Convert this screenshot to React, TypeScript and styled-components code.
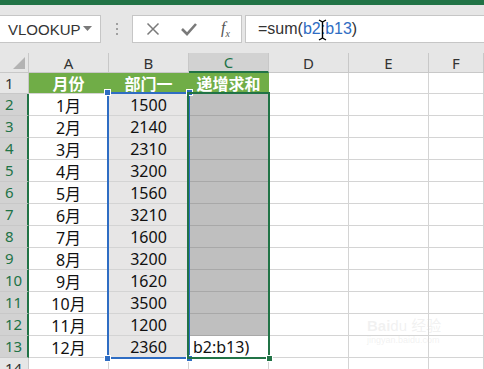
import styled, { createGlobalStyle } from "styled-components";

const GlobalStyle = createGlobalStyle`
  html, body {
    margin: 0;
    padding: 0;
    background: #fff;
  }
  body {
    font-family: "Noto Sans", "Noto Sans CJK SC", sans-serif;
  }
`;

const GREEN = "#217346";
const BLUE = "#2f6dc3";
const GRID = "#d4d4d4";

const months = ["1月", "2月", "3月", "4月", "5月", "6月", "7月", "8月", "9月", "10月", "11月", "12月"];
const amounts = ["1500", "2140", "2310", "3200", "1560", "3210", "1600", "3200", "1620", "3500", "1200", "2360"];
const letters = ["A", "B", "C", "D", "E", "F"];

function App() {
  return (
    <Page>
      <GlobalStyle />
      <RibbonEdge />
      <Toolbar>
        <NameBox>
          VLOOKUP
          <svg width="9" height="6" viewBox="0 0 9 6">
            <path d="M0 0 L9 0 L4.5 5 Z" fill="#7a7a7a" />
          </svg>
        </NameBox>
        <Grip>
          <i />
          <i />
          <i />
        </Grip>
        <IconBox>
          <svg width="16" height="16" viewBox="0 0 16 16">
            <path d="M2.5 2.5 L13.5 13.5 M13.5 2.5 L2.5 13.5" stroke="#7a7a7a" strokeWidth="1.5" />
          </svg>
          <svg width="18" height="16" viewBox="0 0 18 16">
            <path d="M2 8 L7 13 L16 3" stroke="#7a7a7a" strokeWidth="2.6" fill="none" />
          </svg>
          <Fx>
            f<sub>x</sub>
          </Fx>
        </IconBox>
        <FormulaBox>
          =sum(<Ref>b2:b13</Ref>)
          <Caret width="9" height="22" viewBox="0 0 9 22">
            <path d="M1 1 L4.5 3 L8 1 M4.5 3 L4.5 19 M1 21 L4.5 19 L8 21" stroke="#000" strokeWidth="1.4" fill="none" />
          </Caret>
        </FormulaBox>
      </Toolbar>

      <Sheet>
        <Corner $r={1} $c={1}>
          <svg width="12" height="12" viewBox="0 0 12 12">
            <path d="M12 0 L12 12 L0 12 Z" fill="#b3b3b3" />
          </svg>
        </Corner>
        {letters.map((l, i) => (
          <ColHead key={l} $r={1} $c={i + 2} $active={l === "C"}>
            {l}
          </ColHead>
        ))}

        {Array.from({ length: 14 }, (_, i) => (
          <RowHead key={i} $r={i + 2} $c={1} $active={i >= 1 && i <= 12}>
            {i + 1}
          </RowHead>
        ))}

        <Cell $r={2} $c={2} $fill="#70ad47" $bold $light>月份</Cell>
        <Cell $r={2} $c={3} $fill="#70ad47" $bold $light>部门一</Cell>
        <Cell $r={2} $c={4} $fill="#70ad47" $bold $light>递增求和</Cell>
        {[5, 6, 7].map((c) => (
          <Cell key={c} $r={2} $c={c} />
        ))}

        {months.map((m, i) => (
          <Row key={m} r={i + 3} month={m} amount={amounts[i]} last={i === 11} />
        ))}

        {[2, 3, 4, 5, 6, 7].map((c) => (
          <Cell key={c} $r={15} $c={c} />
        ))}

        <Frame $col={3} $color={BLUE} $z={2}>
          <Handle $top $left $color={BLUE} />
          <Handle $top $color={BLUE} />
          <Handle $left $color={BLUE} />
          <Handle $color={BLUE} />
        </Frame>
        <Frame $col={4} $color={GREEN} $z={3}>
          <Handle $color={GREEN} />
        </Frame>
      </Sheet>

      <Watermark>
        <b>Bai</b>
        <span>du</span> 经验
        <small>jingyan.baidu.com</small>
      </Watermark>
    </Page>
  );
}

function Row({ r, month, amount, last }: { r: number; month: string; amount: string; last: boolean }) {
  return (
    <>
      <Cell $r={r} $c={2}>{month}</Cell>
      <Cell $r={r} $c={3} $fill="#e7e6e6">{amount}</Cell>
      {last ? (
        <Cell $r={r} $c={4} $start>b2:b13)</Cell>
      ) : (
        <Cell $r={r} $c={4} $fill="#bfbfbf" $line="#a8a8a8" />
      )}
      {[5, 6, 7].map((c) => (
        <Cell key={c} $r={r} $c={c} />
      ))}
    </>
  );
}

export default App;

const Page = styled.div`
  position: relative;
  width: 484px;
  height: 369px;
  overflow: hidden;
  background: #fff;
  display: flex;
  flex-direction: column;
`;

const RibbonEdge = styled.div`
  height: 5px;
  flex: none;
  background: ${GREEN};
`;

const Toolbar = styled.div`
  height: 48px;
  flex: none;
  box-sizing: border-box;
  padding-top: 10px;
  background: #e6e6e6;
  display: flex;
  align-items: flex-start;
`;

const NameBox = styled.div`
  width: 101px;
  height: 28px;
  box-sizing: border-box;
  background: #fff;
  border: 1px solid #c6c6c6;
  border-left: none;
  padding: 0 8px 0 8px;
  display: flex;
  align-items: center;
  justify-content: space-between;
  font-family: "Liberation Sans", sans-serif;
  font-size: 15px;
  color: #333;
`;

const Grip = styled.div`
  width: 31px;
  height: 28px;
  display: flex;
  flex-direction: column;
  align-items: center;
  justify-content: center;
  gap: 3px;

  i {
    display: block;
    width: 2px;
    height: 2px;
    background: #a0a0a0;
  }
`;

const IconBox = styled.div`
  width: 110px;
  height: 28px;
  box-sizing: border-box;
  background: #fff;
  border: 1px solid #c6c6c6;
  display: flex;
  align-items: center;
  padding-left: 12px;
  gap: 19px;
`;

const Fx = styled.span`
  font-family: "Liberation Serif", serif;
  font-style: italic;
  font-size: 16px;
  color: #555;
  margin-left: 4px;

  sub {
    font-size: 10px;
  }
`;

const FormulaBox = styled.div`
  position: relative;
  flex: 1;
  height: 28px;
  margin-left: 3px;
  box-sizing: border-box;
  background: #fff;
  border: 1px solid #c6c6c6;
  border-right: none;
  padding-left: 12px;
  display: flex;
  align-items: center;
  font-family: "Liberation Sans", sans-serif;
  font-size: 16px;
  color: #333;
`;

const Ref = styled.span`
  color: ${BLUE};
`;

const Caret = styled.svg`
  position: absolute;
  left: 72px;
  top: 3px;
`;

const Sheet = styled.div`
  flex: 1;
  display: grid;
  grid-template-columns: 29px repeat(5, 80px) 1fr;
  grid-template-rows: 20px 21px repeat(12, 22px) 1fr;
  font-family: "Noto Sans", "Noto Sans CJK SC", sans-serif;
`;

type Place = { $r: number; $c: number };

const HeadBase = styled.div<Place & { $active?: boolean }>`
  grid-row: ${(p) => p.$r};
  grid-column: ${(p) => p.$c};
  box-sizing: border-box;
  display: flex;
  align-items: center;
  justify-content: center;
  font-size: 15px;
  line-height: 1;
  background: ${(p) => (p.$active ? "#d2d2d2" : "#e6e6e6")};
  color: ${(p) => (p.$active ? GREEN : "#333")};
  border-right: 1px solid #c8c8c8;
  border-bottom: 1px solid #c8c8c8;
`;

const Corner = styled(HeadBase)`
  align-items: flex-end;
  justify-content: flex-end;
  padding: 0 3px 3px 0;
`;

const ColHead = styled(HeadBase)`
  padding-top: 1px;
  border-bottom: ${(p) => (p.$active ? `2px solid ${GREEN}` : "1px solid #c8c8c8")};
`;

const RowHead = styled(HeadBase)`
  justify-content: flex-start;
  padding-left: 5px;
  align-items: flex-start;
  padding-top: 3px;
  border-right: ${(p) => (p.$active ? `2px solid ${GREEN}` : "1px solid #c8c8c8")};
`;

const Cell = styled.div<
  Place & { $fill?: string; $bold?: boolean; $light?: boolean; $start?: boolean; $line?: string }
>`
  grid-row: ${(p) => p.$r};
  grid-column: ${(p) => p.$c};
  box-sizing: border-box;
  min-width: 0;
  overflow: hidden;
  white-space: nowrap;
  display: flex;
  align-items: center;
  justify-content: ${(p) => (p.$start ? "flex-start" : "center")};
  padding-left: ${(p) => (p.$start ? "4px" : "0")};
  background: ${(p) => p.$fill ?? "#fff"};
  border-right: 1px solid ${(p) => p.$line ?? p.$fill ?? GRID};
  border-bottom: 1px solid ${(p) => p.$line ?? GRID};
  font-size: 16px;
  font-weight: ${(p) => (p.$bold ? 700 : 400)};
  color: ${(p) => (p.$light ? "#fff" : "#111")};
`;

const Frame = styled.div<{ $col: number; $color: string; $z: number }>`
  grid-row: 3 / 15;
  grid-column: ${(p) => p.$col};
  position: relative;
  z-index: ${(p) => p.$z};
  margin: -2px -1px -1px -2px;
  border: 2px solid ${(p) => p.$color};
  pointer-events: none;
`;

const Handle = styled.span<{ $top?: boolean; $left?: boolean; $color: string }>`
  position: absolute;
  width: 7px;
  height: 7px;
  box-sizing: border-box;
  background: ${(p) => p.$color};
  border: 1px solid #fff;
  ${(p) => (p.$top ? "top: -5px;" : "bottom: -5px;")}
  ${(p) => (p.$left ? "left: -5px;" : "right: -5px;")}
`;

const Watermark = styled.div`
  position: absolute;
  left: 367px;
  top: 318px;
  width: 100px;
  color: rgba(215, 215, 215, 0.35);
  font-family: "Liberation Sans", "Noto Sans CJK SC", sans-serif;
  font-size: 15px;
  line-height: 16px;
  pointer-events: none;

  b {
    font-weight: 700;
  }

  small {
    display: block;
    font-size: 9px;
    line-height: 12px;
  }
`;
